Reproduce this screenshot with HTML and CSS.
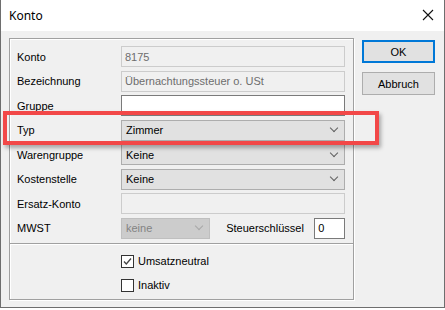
FILE: index.html
```html
<!DOCTYPE html>
<html lang="de">
<head>
    <meta charset="UTF-8">
    <title>Konto</title>
    <link rel="stylesheet" href="styles.css">
</head>
<body>
    <div class="window">
        <div class="titlebar">
            <span class="title">Konto</span>
            <svg class="close" width="12" height="12" viewBox="0 0 12 12">
                <path d="M1 1 L11 11 M11 1 L1 11" stroke="#111" stroke-width="1.1" fill="none"/>
            </svg>
        </div>

        <div class="client">
            <div class="group">
                <div class="fields">
                    <label>Konto</label>
                    <div class="edit disabled">8175</div>

                    <label>Bezeichnung</label>
                    <div class="edit disabled">Übernachtungssteuer o. USt</div>

                    <label>Gruppe</label>
                    <div class="edit"></div>

                    <label>Typ</label>
                    <div class="combo"><span>Zimmer</span><i class="chev"></i></div>

                    <label>Warengruppe</label>
                    <div class="combo"><span>Keine</span><i class="chev"></i></div>

                    <label>Kostenstelle</label>
                    <div class="combo"><span>Keine</span><i class="chev"></i></div>

                    <label>Ersatz-Konto</label>
                    <div class="edit disabled"></div>

                    <label>MWST</label>
                    <div class="mwst-row">
                        <div class="combo combo-disabled"><span>keine</span><i class="chev"></i></div>
                        <span class="steuer-label">Steuerschlüssel</span>
                        <div class="edit small">0</div>
                    </div>
                </div>

                <div class="sep"></div>

                <div class="checks">
                    <div class="check">
                        <span class="box">
                            <svg width="11" height="11" viewBox="0 0 11 11">
                                <path d="M2 5.5 L4.3 8 L9 2.5" stroke="#444" stroke-width="1.3" fill="none"/>
                            </svg>
                        </span>
                        Umsatzneutral
                    </div>
                    <div class="check">
                        <span class="box"></span>
                        Inaktiv
                    </div>
                </div>
            </div>

            <div class="buttons">
                <button class="btn btn-default">OK</button>
                <button class="btn">Abbruch</button>
            </div>
        </div>

        <!-- annotation frame round the Typ row -->
        <div class="highlight"></div>
    </div>
</body>
</html>
```

FILE: styles.css
```css
* { margin: 0; padding: 0; box-sizing: border-box; }

body {
    background: #fff;
    font-family: 'Liberation Sans', Arial, sans-serif;
    font-size: 11px;
    color: #000;
}

.window {
    position: relative;
    width: 445px;
    height: 308px;
    background: #f0f0f0;
    border: 1px solid #6e6e6e;
    border-top: none;
}

.titlebar {
    height: 31px;
    background: #fff;
    display: flex;
    align-items: center;
    justify-content: space-between;
    padding: 0 10px 0 8px;
}

.title {
    font-family: 'Noto Sans', 'Open Sans', sans-serif;
    font-size: 12px;
    padding-bottom: 1px;
}

.close {
    margin-top: -1px;
}

.client {
    display: flex;
    align-items: flex-start;
    padding: 7px 0 0 8px;
}

.group {
    width: 345px;
    height: 262px;
    border: 1px solid #a0a0a0;
    box-shadow: inset 1px 1px 0 #fff, 1px 1px 0 #fff;
}

.fields {
    display: grid;
    grid-template-columns: 105px 224px;
    grid-auto-rows: 21px;
    row-gap: 3.5px;
    padding: 7px 0 0 6px;
}

.fields label {
    display: flex;
    align-items: center;
    padding-left: 1px;
}

.edit {
    display: flex;
    align-items: center;
    padding-left: 3px;
    background: #fff;
    border: 1px solid #7a7a7a;
}

.edit.disabled {
    background: #f0f0f0;
    border-color: #cccccc;
    color: #6d6d6d;
}

.combo {
    display: flex;
    align-items: center;
    justify-content: space-between;
    padding: 0 7px 0 4px;
    background: #e1e1e1;
    border: 1px solid #adadad;
}

.chev {
    width: 6px;
    height: 6px;
    border-right: 1px solid #606060;
    border-bottom: 1px solid #606060;
    transform: rotate(45deg);
    margin-top: -4px;
}

.combo-disabled {
    width: 90px;
    background: #cccccc;
    border-color: #bfbfbf;
    color: #838383;
}

.combo-disabled .chev {
    border-color: #a8a8a8;
}

.mwst-row {
    display: flex;
    align-items: stretch;
}

.steuer-label {
    display: flex;
    align-items: center;
    margin-left: 16px;
    width: 89px;
}

.edit.small {
    width: 31px;
}

.sep {
    margin-top: 4px;
    height: 2px;
    border-top: 1px solid #a0a0a0;
    border-bottom: 1px solid #fff;
}

.checks {
    display: flex;
    flex-direction: column;
    gap: 11px;
    padding: 10px 0 0 111px;
}

.check {
    display: flex;
    align-items: center;
    gap: 4px;
    height: 13px;
}

.box {
    width: 13px;
    height: 13px;
    background: #fff;
    border: 1px solid #333;
    display: flex;
    align-items: center;
    justify-content: center;
}

.buttons {
    display: flex;
    flex-direction: column;
    gap: 9px;
    margin: 2px 0 0 8px;
}

.btn {
    width: 73px;
    height: 23px;
    background: #e1e1e1;
    border: 1px solid #adadad;
    font-family: 'Liberation Sans', Arial, sans-serif;
    font-size: 11px;
    color: #000;
}

.btn-default {
    border: 2px solid #0078d7;
}

.highlight {
    position: absolute;
    left: 2px;
    top: 111px;
    width: 376px;
    height: 34px;
    border: 4px solid #f24848;
    box-shadow: 2px 3px 4px rgba(0, 0, 0, 0.3);
}
```
